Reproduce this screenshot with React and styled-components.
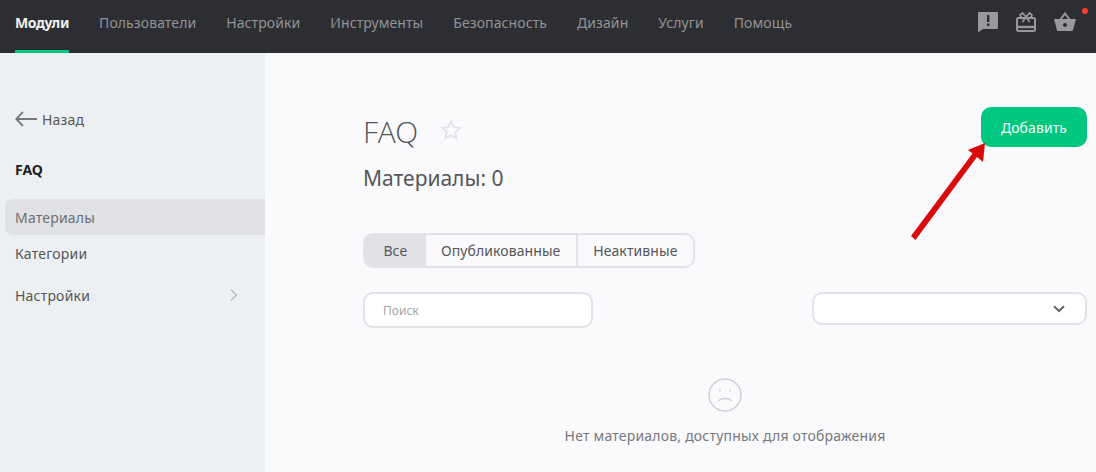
import React from 'react'
import styled, { createGlobalStyle } from 'styled-components'

const GlobalStyle = createGlobalStyle`
  html, body {
    margin: 0;
    padding: 0;
    background: #fafafc;
  }
  body {
    font-family: 'Noto Sans', 'Open Sans', sans-serif;
    overflow: hidden;
  }
  * {
    box-sizing: border-box;
  }
`

const Page = styled.div`
  width: 1096px;
  height: 472px;
  display: flex;
  flex-direction: column;
  position: relative;
  overflow: hidden;
`

const TopBar = styled.header`
  height: 53px;
  flex: none;
  background: #2d2e33;
  display: flex;
  justify-content: space-between;
  padding: 0 20px 0 15px;
`

const TopMenu = styled.nav`
  display: flex;
  gap: 30px;
`

const TopLink = styled.a`
  height: 53px;
  padding-bottom: 5px;
  display: flex;
  align-items: center;
  font-size: 14px;
  letter-spacing: ${props => (props.$active ? '-0.35px' : '0.09px')};
  white-space: nowrap;
  color: ${props => (props.$active ? '#f0f0f0' : '#929396')};
  font-weight: ${props => (props.$active ? 700 : 400)};
  border-bottom: 3px solid ${props => (props.$active ? '#00c77f' : 'transparent')};
`

const TopIcons = styled.div`
  display: flex;
  align-items: flex-start;
  padding-top: 12px;
  gap: 18px;
  position: relative;
`

const Dot = styled.span`
  position: absolute;
  top: 8px;
  right: -12px;
  width: 6px;
  height: 6px;
  border-radius: 50%;
  background: #ff3b30;
`

const Body = styled.div`
  flex: 1;
  display: flex;
  min-height: 0;
`

const Sidebar = styled.aside`
  width: 265px;
  flex: none;
  background: #edf0f2;
  padding: 54px 0 0 5px;
`

const BackLink = styled.a`
  display: flex;
  align-items: center;
  gap: 5px;
  height: 24px;
  padding-left: 10px;
  font-size: 14px;
  letter-spacing: 0.2px;
  color: #55565a;
`

const SideTitle = styled.div`
  margin-top: 27px;
  padding-left: 10px;
  height: 24px;
  line-height: 24px;
  font-size: 14px;
  font-weight: 700;
  color: #1f2023;
`

const SideItem = styled.a`
  height: 36px;
  margin-top: ${props => props.$gap || 0}px;
  padding: 0 27px 0 10px;
  display: flex;
  align-items: center;
  justify-content: space-between;
  font-size: 14px;
  letter-spacing: 0.2px;
  color: ${props => (props.$active ? '#6d6e72' : '#55565a')};
  background: ${props => (props.$active ? '#e1e2e6' : 'transparent')};
  border-radius: 8px 0 0 8px;
`

const Main = styled.main`
  flex: 1;
  padding: 54px 9px 0 98px;
  display: flex;
  flex-direction: column;
`

const HeaderRow = styled.div`
  display: flex;
  justify-content: space-between;
  align-items: flex-start;
`

const TitleBlock = styled.div`
  display: flex;
  flex-direction: column;
`

const TitleLine = styled.div`
  display: flex;
  align-items: center;
  gap: 22px;
  height: 50px;
`

const Title = styled.h1`
  margin: -2px 0 0;
  font-family: 'Open Sans', sans-serif;
  font-weight: 300;
  font-size: 30px;
  letter-spacing: -0.4px;
  color: #55565a;
`

const StarIcon = styled.svg`
  margin-top: -4px;
`

const Count = styled.div`
  margin-top: 7px;
  font-size: 21px;
  line-height: 28px;
  color: #55565a;
`

const AddButton = styled.button`
  width: 106px;
  height: 40px;
  border: none;
  border-radius: 10px;
  background: #00c77f;
  color: #f2fbf7;
  font-family: inherit;
  font-size: 14px;
  letter-spacing: 0.1px;
`

const Tabs = styled.div`
  margin-top: 41px;
  width: 332px;
  height: 35px;
  display: flex;
  background: #fafafc;
  border: 2px solid #e2e3e8;
  border-radius: 10px;
  overflow: hidden;
`

const Tab = styled.div`
  width: ${props => props.$width}px;
  display: flex;
  align-items: center;
  justify-content: center;
  font-size: 14px;
  letter-spacing: 0.09px;
  white-space: nowrap;
  color: #55565a;
  background: ${props => (props.$active ? '#e1e2e6' : 'transparent')};
  border-left: ${props => (props.$divided ? '2px solid #e2e3e8' : 'none')};
`

const Filters = styled.div`
  margin-top: 24px;
  display: flex;
  justify-content: space-between;
  align-items: flex-start;
`

const Search = styled.div`
  width: 230px;
  height: 36px;
  padding-left: 18px;
  display: flex;
  align-items: center;
  background: #fff;
  border: 2px solid #e2e3e8;
  border-radius: 10px;
  font-size: 12px;
  color: #a4a5a9;
`

const Select = styled.div`
  width: 275px;
  height: 33px;
  padding-right: 20px;
  display: flex;
  align-items: center;
  justify-content: flex-end;
  background: #fff;
  border: 2px solid #e2e3e8;
  border-radius: 10px;
`

const Empty = styled.div`
  margin-top: 50px;
  display: flex;
  flex-direction: column;
  align-items: center;
  gap: 14px;
  font-size: 14px;
  letter-spacing: 0.2px;
  color: #77787c;
`

const Pointer = styled.svg`
  position: absolute;
  left: 900px;
  top: 130px;
`

const App = () => (
  <Page>
    <GlobalStyle />
    <TopBar>
      <TopMenu>
        <TopLink $active>Модули</TopLink>
        <TopLink>Пользователи</TopLink>
        <TopLink>Настройки</TopLink>
        <TopLink>Инструменты</TopLink>
        <TopLink>Безопасность</TopLink>
        <TopLink>Дизайн</TopLink>
        <TopLink>Услуги</TopLink>
        <TopLink>Помощь</TopLink>
      </TopMenu>
      <TopIcons>
        <svg width="20" height="20" viewBox="0 0 20 20">
          <path
            fill="#98999c"
            fillRule="evenodd"
            d="M1 0h18a1 1 0 0 1 1 1v15a1 1 0 0 1-1 1H5l-5 3.500V1a1 1 0 0 1 1-1zM9 3v7h2.400V3zM9 11.500V14h2.400v-2.500z"
          />
        </svg>
        <svg width="20" height="20" viewBox="0 0 20 20" fill="none" stroke="#98999c">
          <rect x="1" y="6" width="18" height="13" rx="1.500" strokeWidth="2" />
          <path d="M1 15h18" strokeWidth="2.400" />
          <path d="M5.500 6 4 3l2.500-2L10 5l3.500-4L16 3l-1.500 3M10 5 6.500 10M10 5l3.500 5" strokeWidth="1.700" />
        </svg>
        <svg width="22" height="20" viewBox="0 0 22 20">
          <path fill="none" stroke="#98999c" strokeWidth="2" d="M6 8 11 1.500 16 8" />
          <path
            fill="#98999c"
            fillRule="evenodd"
            d="M0 7h22l-3 11.300a1 1 0 0 1-1 .7H4a1 1 0 0 1-1-.7zM11 11a2 2 0 1 0 0 4 2 2 0 0 0 0-4z"
          />
        </svg>
        <Dot />
      </TopIcons>
    </TopBar>
    <Body>
      <Sidebar>
        <BackLink>
          <svg width="22" height="16" viewBox="0 0 22 16" fill="none" stroke="#77787c" strokeWidth="1.800">
            <path d="M22 8H1.500M8 1 1.200 8 8 15" />
          </svg>
          Назад
        </BackLink>
        <SideTitle>FAQ</SideTitle>
        <SideItem $active $gap={17}>Материалы</SideItem>
        <SideItem>Категории</SideItem>
        <SideItem $gap={6}>
          Настройки
          <svg width="8" height="12" viewBox="0 0 8 12" fill="none" stroke="#b4b5b8" strokeWidth="1.200">
            <path d="M1 .8 6.500 6 1 11.200" />
          </svg>
        </SideItem>
      </Sidebar>
      <Main>
        <HeaderRow>
          <TitleBlock>
            <TitleLine>
              <Title>FAQ</Title>
              <StarIcon width="22" height="22" viewBox="0 0 24 24" fill="none" stroke="#dfe2ea" strokeWidth="2">
                <path d="m12 2.500 2.900 6.300 6.800.8-5 4.700 1.300 6.800-6-3.400-6 3.400 1.300-6.800-5-4.700 6.800-.8z" />
              </StarIcon>
            </TitleLine>
            <Count>Материалы: 0</Count>
          </TitleBlock>
          <AddButton>Добавить</AddButton>
        </HeaderRow>
        <Tabs>
          <Tab $active $width={61}>Все</Tab>
          <Tab $width={151}>Опубликованные</Tab>
          <Tab $divided $width={118}>Неактивные</Tab>
        </Tabs>
        <Filters>
          <Search>Поиск</Search>
          <Select>
            <svg width="12" height="8" viewBox="0 0 12 8" fill="none" stroke="#66676b" strokeWidth="2">
              <path d="M1 1.200 6 6l5-4.800" />
            </svg>
          </Select>
        </Filters>
        <Empty>
          <svg width="34" height="34" viewBox="0 0 34 34" fill="none" stroke="#cfd0d3" strokeWidth="1.500">
            <circle cx="17" cy="17" r="16" />
            <path d="M10.500 23c2-3.500 11-3.500 13 0" />
            <circle cx="12" cy="12.500" r="1" fill="#cfd0d3" stroke="none" />
            <circle cx="22" cy="12.500" r="1" fill="#cfd0d3" stroke="none" />
          </svg>
          Нет материалов, доступных для отображения
        </Empty>
      </Main>
    </Body>
    <Pointer width="100" height="120" viewBox="0 0 100 120">
      <path fill="#d90a0a" d="M11 106 15.500 110 77 27 83 32 85 13 68 20 72.500 23.500z" />
    </Pointer>
  </Page>
)

export default App
